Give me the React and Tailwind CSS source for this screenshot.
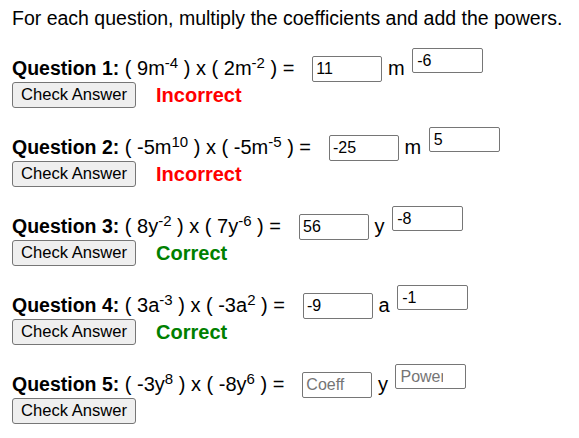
const QUESTIONS = [
  { n: 1, a: '9', v: 'm', p: '-4', b: '2', q: '-2', coeff: '11', power: '-6', result: 'Incorrect' },
  { n: 2, a: '-5', v: 'm', p: '10', b: '-5', q: '-5', coeff: '-25', power: '5', result: 'Incorrect' },
  { n: 3, a: '8', v: 'y', p: '-2', b: '7', q: '-6', coeff: '56', power: '-8', result: 'Correct' },
  { n: 4, a: '3', v: 'a', p: '-3', b: '-3', q: '2', coeff: '-9', power: '-1', result: 'Correct' },
  { n: 5, a: '-3', v: 'y', p: '8', b: '-8', q: '6', coeff: '', power: '', result: '' },
]

function Question({ n, a, v, p, b, q, coeff, power, result }) {
  return (
    <div>
      <div className="flex h-[34px] items-end text-[20px] leading-[27px] whitespace-pre">
        <span>
          <b className="text-[19.5px]">Question {n}:</b> ( {a}{v}<sup>{p}</sup> ) x ( {b}{v}<sup>{q}</sup> ) =
        </span>
        <input
          type="text"
          defaultValue={coeff}
          placeholder="Coeff"
          className="ml-[18px] h-[26px] w-[70px] rounded-[2px] border border-[#767676] pl-[3px] pr-[18px] text-[16px] leading-none placeholder:text-[#757575]"
        />
        <span> {v} </span>
        <input
          type="text"
          defaultValue={power}
          placeholder="Power"
          className="ml-[2px] h-[25px] w-[71px] self-start rounded-[2px] border border-[#767676] pl-[4px] pr-[22px] text-[16px] leading-none placeholder:text-[#757575]"
        />
      </div>
      <div className="flex h-[26px] items-center">
        <button className="h-[26px] rounded-[3px] border border-[#767676] bg-[#efefef] px-[8px] text-[16.6px] leading-none">
          Check Answer
        </button>
        {result && (
          <span
            className={
              result === 'Correct'
                ? 'ml-[20px] text-[20px] leading-[26px] font-bold text-[#008000]'
                : 'ml-[20px] text-[20px] leading-[26px] font-bold text-[#ff0000]'
            }
          >
            {result}
          </span>
        )}
      </div>
    </div>
  )
}

export default function App() {
  return (
    <div className="pl-3 pt-[7px] font-['Liberation_Sans',Arial,sans-serif] text-black">
      <p className="whitespace-nowrap text-[19.5px] leading-[23px]">
        For each question, multiply the coefficients and add the powers.
      </p>
      <div className="mt-[18px] flex flex-col gap-[19px]">
        {QUESTIONS.map((item) => (
          <Question key={item.n} {...item} />
        ))}
      </div>
    </div>
  )
}
